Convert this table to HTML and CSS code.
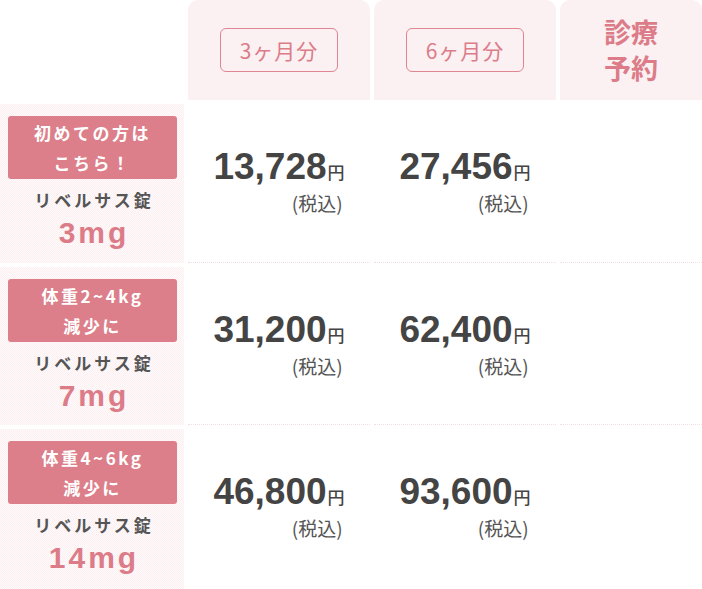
FILE: index.html
```html
<!DOCTYPE html>
<html lang="ja">
<head>
<meta charset="utf-8">
<title>料金表</title>
<link rel="stylesheet" href="styles.css">
</head>
<body>
<div class="table">
  <div class="corner"></div>
  <div class="head"><span class="badge">3ヶ月分</span></div>
  <div class="head"><span class="badge">6ヶ月分</span></div>
  <div class="head"><span class="reserve">診療<br>予約</span></div>

  <div class="label">
    <div class="tag">初めての方は<br>こちら！</div>
    <div class="name">リベルサス錠</div>
    <div class="dose">3mg</div>
  </div>
  <div class="price"><div class="pbox"><div class="amount">13,728<span class="yen">円</span></div><div class="tax">(税込)</div></div></div>
  <div class="price"><div class="pbox"><div class="amount">27,456<span class="yen">円</span></div><div class="tax">(税込)</div></div></div>
  <div class="price"></div>

  <div class="label">
    <div class="tag">体重2~4kg<br>減少に</div>
    <div class="name">リベルサス錠</div>
    <div class="dose">7mg</div>
  </div>
  <div class="price"><div class="pbox"><div class="amount">31,200<span class="yen">円</span></div><div class="tax">(税込)</div></div></div>
  <div class="price"><div class="pbox"><div class="amount">62,400<span class="yen">円</span></div><div class="tax">(税込)</div></div></div>
  <div class="price"></div>

  <div class="label">
    <div class="tag">体重4~6kg<br>減少に</div>
    <div class="name">リベルサス錠</div>
    <div class="dose">14mg</div>
  </div>
  <div class="price last"><div class="pbox"><div class="amount">46,800<span class="yen">円</span></div><div class="tax">(税込)</div></div></div>
  <div class="price last"><div class="pbox"><div class="amount">93,600<span class="yen">円</span></div><div class="tax">(税込)</div></div></div>
  <div class="price last"></div>
</div>
</body>
</html>
```
FILE: styles.css
```css
html, body {
  margin: 0;
  padding: 0;
  background: #ffffff;
}
body {
  font-family: "Noto Sans CJK JP", "Noto Sans", sans-serif;
  color: #444;
  overflow: hidden;
}
.table {
  display: grid;
  grid-template-columns: 184px 182px 182px 142px;
  grid-template-rows: 100px 159px 158px 160px;
  column-gap: 4px;
  row-gap: 4px;
  width: 702px;
}
.head {
  background: #fbf0f2;
  border-radius: 10px 10px 0 0;
  display: flex;
  align-items: center;
  justify-content: center;
}
.badge {
  display: inline-flex;
  align-items: center;
  justify-content: center;
  width: 116px;
  height: 42px;
  border: 1px solid #e08592;
  border-radius: 6px;
  color: #dc7c89;
  font-size: 21px;
  letter-spacing: 1px;
  line-height: 1;
}
.reserve {
  color: #dc7c89;
  font-size: 27px;
  font-weight: 700;
  line-height: 36px;
  text-align: center;
}
.label {
  background-color: #fdf6f7;
  background-image: repeating-conic-gradient(#fbeff2 0 25%, #fffbfb 0 50%);
  background-size: 2px 2px;
  padding: 12px 7px 0 8px;
  display: flex;
  flex-direction: column;
  align-items: center;
}
.tag {
  align-self: stretch;
  height: 63px;
  box-sizing: border-box;
  padding-top: 2px;
  background: #dc7f8a;
  border-radius: 3px;
  color: #fff;
  font-weight: 700;
  font-size: 17px;
  letter-spacing: 2.5px;
  line-height: 30px;
  text-align: center;
}
.name {
  margin-top: 6px;
  color: #555;
  font-weight: 700;
  font-size: 17px;
  letter-spacing: 3px;
  line-height: 30px;
  padding-left: 3px;
}
.dose {
  color: #dc7c89;
  font-family: "Liberation Sans", Arial, sans-serif;
  font-weight: 700;
  font-size: 30px;
  letter-spacing: 3px;
  line-height: 36px;
  padding-left: 3px;
}
.price {
  border-bottom: 1px dotted #f0dfe3;
  display: flex;
  justify-content: center;
  align-items: flex-start;
  padding-top: 41px;
  box-sizing: border-box;
}
.price.last {
  border-bottom: none;
}
.pbox {
  display: flex;
  flex-direction: column;
  align-items: flex-end;
}
.amount {
  font-family: "Liberation Sans", Arial, sans-serif;
  font-weight: 700;
  font-size: 37px;
  line-height: 44px;
  height: 44px;
  color: #444;
  white-space: nowrap;
}
.yen {
  font-family: "Noto Sans CJK JP", sans-serif;
  font-size: 17px;
  font-weight: 500;
  line-height: 0;
  margin-left: 1px;
}
.tax {
  font-size: 19px;
  line-height: 28px;
  color: #555;
  margin-right: 2px;
}
```
